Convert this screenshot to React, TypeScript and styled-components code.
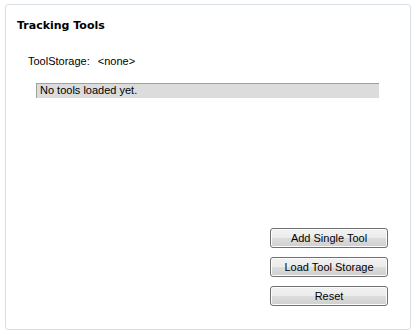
import React from 'react';
import styled, { createGlobalStyle } from 'styled-components';

const GlobalStyle = createGlobalStyle`
  html, body {
    margin: 0;
    padding: 0;
    background: #ffffff;
  }
  body {
    font-family: 'Liberation Sans', Arial, sans-serif;
    font-size: 11px;
    color: #000000;
  }
`;

const Page = styled.div`
  padding: 4px 0 0 5px;
`;

const Panel = styled.div`
  box-sizing: border-box;
  width: 406px;
  height: 326px;
  border: 1px solid #d5dfe5;
  border-radius: 3px;
  display: flex;
  flex-direction: column;
  padding: 14px 22px 23px 11px;
`;

const Title = styled.div`
  font-family: 'DejaVu Sans', Verdana, sans-serif;
  font-weight: bold;
  font-size: 11px;
  line-height: 13px;
`;

const StorageRow = styled.div`
  display: flex;
  gap: 8px;
  margin: 23px 0 0 11px;
  line-height: 13px;
`;

const ToolList = styled.div`
  box-sizing: border-box;
  width: 343px;
  height: 15px;
  margin: 15px 0 0 19px;
  background: #dcdcdc;
  border-top: 1px solid #a0a0a0;
  border-left: 1px solid #a0a0a0;
  padding-left: 3px;
  line-height: 13px;
`;

const Spacer = styled.div`
  flex: 1;
`;

const ButtonColumn = styled.div`
  display: flex;
  flex-direction: column;
  align-items: flex-end;
  gap: 9px;
`;

const Button = styled.button`
  box-sizing: border-box;
  width: 118px;
  height: 20px;
  padding: 0;
  border: 1px solid #707070;
  border-radius: 3px;
  background: linear-gradient(
    to bottom,
    #f2f2f2 0%,
    #ebebeb 50%,
    #dddddd 51%,
    #cfcfcf 100%
  );
  font-family: 'Liberation Sans', Arial, sans-serif;
  font-size: 11px;
  color: #000000;
  box-shadow: inset 0 0 0 1px #fcfcfc;
`;

const buttons = ['Add Single Tool', 'Load Tool Storage', 'Reset'];

const App: React.FC = (): JSX.Element => {
  return (
    <>
      <GlobalStyle />
      <Page>
        <Panel>
          <Title>Tracking Tools</Title>
          <StorageRow>
            <span>ToolStorage:</span>
            <span>&lt;none&gt;</span>
          </StorageRow>
          <ToolList>No tools loaded yet.</ToolList>
          <Spacer />
          <ButtonColumn>
            {buttons.map((label) => (
              <Button key={label}>{label}</Button>
            ))}
          </ButtonColumn>
        </Panel>
      </Page>
    </>
  );
};

export default App;
